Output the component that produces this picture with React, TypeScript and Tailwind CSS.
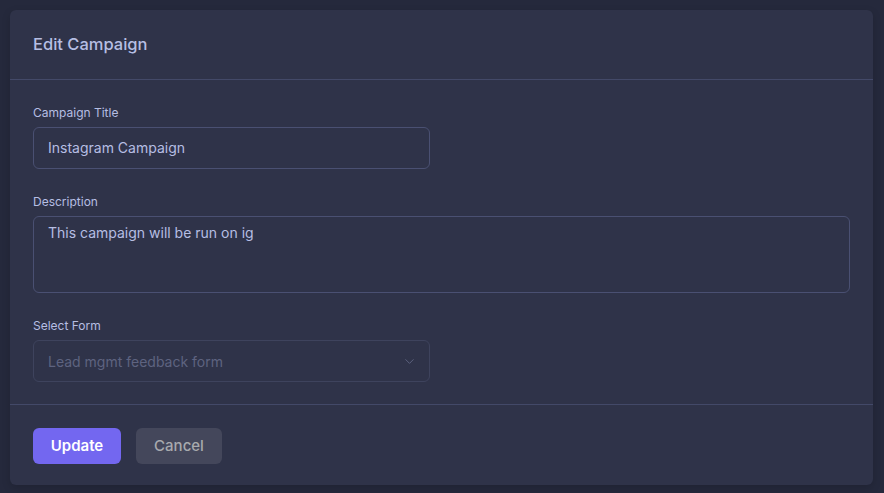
import { ChevronDown } from "lucide-react";

export default function App() {
  return (
    <div className="min-h-screen w-full bg-[#25293c] pt-[10px] pl-[10px] pr-[11px] pb-[8px] font-['Inter',sans-serif]">
      <div className="w-[863px] rounded-md bg-[#2f3349] shadow-[0_3px_9px_rgba(0,0,0,0.15)]">
        <div className="flex h-[70px] items-center border-b border-[#434968] px-[23px]">
          <h1 className="text-[16.5px] font-medium text-[#b6bee3]">Edit Campaign</h1>
        </div>

        <form className="flex flex-col gap-[25px] px-[23px] pt-[25px] pb-[22px]">
          <div>
            <label className="mb-1.5 block text-[12px] leading-4 text-[#b6bee3]">Campaign Title</label>
            <input
              type="text"
              defaultValue="Instagram Campaign"
              className="h-[42px] w-[397px] rounded-md border border-[#4a5072] bg-transparent px-[14px] pb-[2px] text-[14px] text-[#b6bee3] outline-none"
            />
          </div>
          <div>
            <label className="mb-1.5 block text-[12px] leading-4 text-[#b6bee3]">Description</label>
            <textarea
              defaultValue="This campaign will be run on ig"
              className="block h-[77px] w-full resize-none rounded-md border border-[#4a5072] bg-transparent px-[14px] py-[4px] text-[14px] leading-6 text-[#b6bee3] outline-none"
            />
          </div>
          <div>
            <label className="mb-1.5 block text-[12px] leading-4 text-[#b6bee3]">Select Form</label>
            <div className="flex h-[42px] w-[397px] items-center justify-between rounded-md border border-[#3e435d] pl-[14px] pr-[12px]">
              <span className="text-[14px] text-[#5e6380]">Lead mgmt feedback form</span>
              <ChevronDown size={15} strokeWidth={1.5} className="text-[#5e6380]" />
            </div>
          </div>
        </form>

        <div className="flex gap-[15px] border-t border-[#434968] px-[23px] pt-[23px] pb-[21px]">
          <button className="h-9 w-[88px] rounded-md bg-[#7367f0] text-[15px] font-semibold text-white">
            Update
          </button>
          <button className="h-9 w-[86px] rounded-md bg-[#44475b] text-[15px] font-medium text-[#a8aaae]">
            Cancel
          </button>
        </div>
      </div>
    </div>
  );
}
